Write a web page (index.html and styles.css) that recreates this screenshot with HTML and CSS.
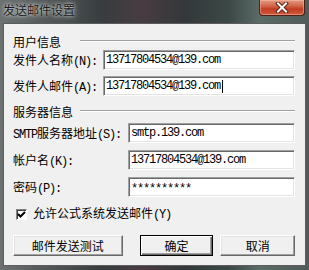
FILE: index.html
```html
<!DOCTYPE html>
<html lang="zh-CN">
<head>
    <meta charset="UTF-8">
    <title>发送邮件设置</title>
    <link rel="stylesheet" href="styles.css">
</head>
<body>
    <div class="window">
        <!-- Title bar -->
        <div class="titlebar">
            <span class="title">发送邮件设置</span>
            <div class="close-btn">
                <svg width="14" height="11" viewBox="0 0 14 11">
                    <path d="M3 1.5 L11 9.5 M11 1.5 L3 9.5" stroke="#5a2418" stroke-width="4" stroke-linecap="square"/>
                    <path d="M3 1.5 L11 9.5 M11 1.5 L3 9.5" stroke="#fff" stroke-width="2" stroke-linecap="square"/>
                </svg>
            </div>
        </div>

        <div class="client">
            <!-- User info -->
            <div class="group-head">
                <span class="group-title">用户信息</span>
                <span class="etched"></span>
            </div>
            <div class="row row-first">
                <label class="label-user">发件人名称<span class="en">(N):</span></label>
                <div class="field">13717804534@139.com</div>
            </div>
            <div class="row row-user">
                <label class="label-user">发件人邮件<span class="en">(A):</span></label>
                <div class="field">13717804534@139.com<span class="caret"></span></div>
            </div>

            <!-- Server info -->
            <div class="group-head group-server">
                <span class="group-title">服务器信息</span>
                <span class="etched"></span>
            </div>
            <div class="row row-first-server">
                <label class="label-server"><span class="en">SMTP</span>服务器地址<span class="en">(S):</span></label>
                <div class="field">smtp.139.com</div>
            </div>
            <div class="row row-server">
                <label class="label-server">帐户名<span class="en">(K):</span></label>
                <div class="field">13717804534@139.com</div>
            </div>
            <div class="row row-server">
                <label class="label-server">密码<span class="en">(P):</span></label>
                <div class="field password">**********</div>
            </div>

            <!-- Checkbox -->
            <div class="check-row">
                <span class="checkbox">
                    <svg width="9" height="9" viewBox="0 0 9 9">
                        <path d="M1 4 L3.5 6.5 L8 2" fill="none" stroke="#000" stroke-width="2"/>
                    </svg>
                </span>
                <span class="check-label">允许公式系统发送邮件<span class="en">(Y)</span></span>
            </div>

            <!-- Buttons -->
            <div class="buttons">
                <button class="btn btn-test">邮件发送测试</button>
                <button class="btn btn-ok">确定</button>
                <button class="btn btn-cancel">取消</button>
            </div>
        </div>
    </div>
</body>
</html>
```

FILE: styles.css
```css
* {
    margin: 0;
    padding: 0;
    box-sizing: border-box;
}

body {
    width: 309px;
    height: 270px;
    overflow: hidden;
    font-family: "Noto Sans CJK SC", "Liberation Sans", sans-serif;
    font-size: 12px;
    color: #000;
}

.window {
    width: 309px;
    height: 270px;
    padding: 0 3px 4px 3px;
    display: flex;
    flex-direction: column;
    background: linear-gradient(90deg, #6b7070 0%, #545959 14%, #383d3f 33%, #473c42 46%, #33383a 60%, #3c4846 74%, #5b6b66 84%, #505b59 100%);
}

.titlebar {
    height: 23px;
    display: flex;
    align-items: flex-start;
}

.title {
    padding-top: 3px;
    line-height: 14px;
    font-size: 12px;
    color: #1c1c1c;
    text-shadow: 0 0 6px rgba(230, 235, 235, 0.9), 0 0 3px rgba(230, 235, 235, 0.8);
}

.close-btn {
    margin-left: auto;
    margin-right: 1px;
    width: 46px;
    height: 16px;
    border: 1px solid #4a2018;
    border-top: none;
    border-radius: 0 0 4px 4px;
    background: linear-gradient(180deg, #e49a84 0%, #d2654a 40%, #c23c22 60%, #cf5a3a 100%);
    box-shadow: inset 0 0 0 1px rgba(255, 200, 180, 0.45);
    display: flex;
    align-items: center;
    justify-content: center;
}

.client {
    flex: 1;
    border: 1px solid #5c5c5c;
    background: #f0f0f0;
    padding: 11px 10px 0 9px;
}

/* half-width latin like the dialog's system font */
.en {
    font-family: "Liberation Mono", monospace;
    font-size: 12px;
    letter-spacing: -1.2px;
}

.group-head {
    height: 14px;
    display: flex;
    align-items: center;
}

.group-server {
    margin-top: 9px;
}

.group-title {
    width: 67px;
    line-height: 14px;
}

.etched {
    flex: 1;
    height: 2px;
    margin-top: -3px;
    border-top: 1px solid #a0a0a0;
    border-bottom: 1px solid #fff;
}

.row {
    display: flex;
    align-items: center;
    height: 20px;
}

.row-first {
    margin-top: 1px;
}

.row-user {
    margin-top: 6px;
}

.row-first-server {
    margin-top: 4px;
}

.row-server {
    margin-top: 7px;
}

.label-user {
    width: 90px;
    white-space: nowrap;
}

.label-server {
    width: 115px;
    white-space: nowrap;
}

.field {
    flex: 1;
    height: 20px;
    padding-left: 2px;
    background: #fff;
    border: 1px solid;
    border-color: #a0a0a0 #fff #fff #a0a0a0;
    box-shadow: inset 1px 1px #696969, inset -1px -1px #e3e3e3;
    font-family: "Liberation Mono", monospace;
    font-size: 12px;
    letter-spacing: -1.2px;
    line-height: 18px;
    white-space: nowrap;
    display: flex;
    align-items: center;
}

.password {
    letter-spacing: -1.2px;
    padding-top: 3px;
}

.caret {
    display: inline-block;
    width: 1px;
    height: 13px;
    margin-left: 2px;
    background: #000;
}

.check-row {
    margin-top: 10px;
    height: 14px;
    display: flex;
    align-items: center;
}

.checkbox {
    margin-left: 3px;
    width: 11px;
    height: 11px;
    background: #fff;
    border: 1px solid;
    border-color: #808080 #fff #fff #808080;
    box-shadow: inset 1px 1px #404040;
    display: flex;
    align-items: center;
    justify-content: center;
}

.check-label {
    margin-left: 6px;
    line-height: 14px;
}

.buttons {
    margin-top: 14px;
    display: flex;
}

.btn {
    height: 21px;
    background: #f0f0f0;
    border: 1px solid;
    border-color: #fff #696969 #696969 #fff;
    box-shadow: inset -1px -1px #a0a0a0, inset 1px 1px #e3e3e3;
    font-family: "Noto Sans CJK SC", "Liberation Sans", sans-serif;
    font-size: 12px;
    color: #000;
}

.btn-test {
    width: 110px;
}

.btn-ok {
    width: 74px;
    margin-left: 17px;
    border-color: #000;
    box-shadow: inset 1px 1px #fff, inset -1px -1px #696969, inset -2px -2px #a0a0a0;
}

.btn-cancel {
    width: 75px;
    margin-left: 7px;
}
```
